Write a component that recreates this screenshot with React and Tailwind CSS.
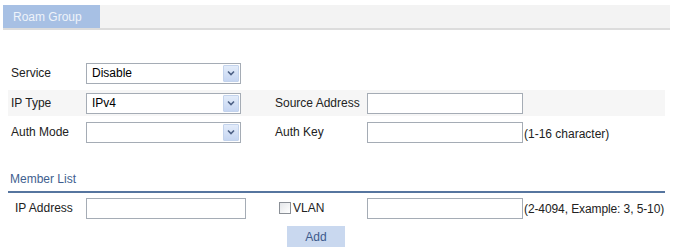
import React from "react";

function Select({ value }) {
  return (
    <div className="relative flex h-[21px] w-[155px] items-center border border-[#a5acb5] bg-white pl-[5px] text-[12px] text-black">
      <span>{value}</span>
      <div className="absolute right-[1px] top-[1px] flex h-[17px] w-[16px] items-center justify-center rounded-[1px] border border-[#c3d3ec] bg-gradient-to-b from-[#e3ecfa] to-[#c6d6f2]">
        <svg width="8" height="6" viewBox="0 0 8 6">
          <path d="M1 1.5 L4 4.5 L7 1.5" fill="none" stroke="#4d6185" strokeWidth="1.6" />
        </svg>
      </div>
    </div>
  );
}

function Input({ w = "w-[156px]" }) {
  return <div className={`h-[21px] ${w} shrink-0 border border-[#a5acb5] bg-white`} />;
}

export default function App() {
  return (
    <div
      className="h-[252px] w-[673px] bg-white text-[12px] text-[#222]"
      style={{ fontFamily: '"Liberation Sans", Arial, sans-serif' }}
    >
      <div className="pt-[5px] pl-[3px] pr-[3px]">
        <div className="flex h-[25px] border-b-2 border-[#dcdcdc] bg-[#f3f3f3]">
          <div className="flex w-[97px] items-center bg-[#a7c0e4] pl-[10px] text-[12px] text-[#eef3fa]">
            Roam Group
          </div>
        </div>
      </div>

      <div className="mt-[29px] px-[8px]">
        <div className="flex h-[28px] items-center">
          <div className="w-[78px] pl-[3px]">Service</div>
          <Select value="Disable" />
        </div>
        <div className="mt-[3px] flex h-[26px] items-center bg-[#f6f6f6]">
          <div className="w-[78px] pl-[3px]">IP Type</div>
          <Select value="IPv4" />
          <div className="ml-[34px] w-[92px]">Source Address</div>
          <Input />
        </div>
        <div className="mt-[2px] flex h-[28px] items-center">
          <div className="w-[78px] pl-[3px]">Auth Mode</div>
          <Select value="" />
          <div className="ml-[34px] w-[92px]">Auth Key</div>
          <Input />
          <div className="self-end whitespace-nowrap pb-[3px] pl-[1px]">(1-16 character)</div>
        </div>

        <div className="mt-[24px] border-b-2 border-[#56759f] pb-[3px] pl-[2px] text-[12px] text-[#3f5f8f]">
          Member List
        </div>

        <div className="mt-[2px] flex h-[26px] items-center">
          <div className="w-[78px] pl-[7px]">IP Address</div>
          <Input w="w-[160px]" />
          <div className="ml-[33px] flex w-[88px] items-center">
            <div className="h-[12px] w-[12px] border border-[#8a8f96] bg-gradient-to-br from-[#e4e6e9] to-white" />
            <span className="ml-[2px]">VLAN</span>
          </div>
          <Input />
          <div className="self-end whitespace-nowrap pb-[3px] pl-[1px] tracking-[-0.1px]">(2-4094, Example: 3, 5-10)</div>
        </div>

        <div className="mt-[5px] flex">
          <div className="ml-[279px] flex h-[21px] w-[58px] items-center justify-center bg-[#c9d8ef] text-[#3d5a8c]">
            Add
          </div>
        </div>
      </div>
    </div>
  );
}
